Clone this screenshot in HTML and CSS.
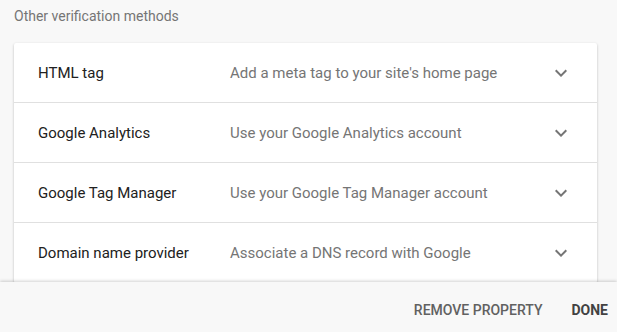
FILE: index.html
```html
<!DOCTYPE html>
<html>
<head>
<meta charset="utf-8">
<link rel="stylesheet" href="styles.css">
</head>
<body>
<div class="page">
  <div class="content">
    <div class="heading">Other verification methods</div>
    <div class="card">
      <div class="row">
        <div class="title">HTML tag</div>
        <div class="desc">Add a meta tag to your site's home page</div>
        <svg class="chev" viewBox="0 0 24 24" width="24" height="24"><path d="M16.59 8.59L12 13.17 7.41 8.59 6 10l6 6 6-6z"/></svg>
      </div>
      <div class="row">
        <div class="title">Google Analytics</div>
        <div class="desc">Use your Google Analytics account</div>
        <svg class="chev" viewBox="0 0 24 24" width="24" height="24"><path d="M16.59 8.59L12 13.17 7.41 8.59 6 10l6 6 6-6z"/></svg>
      </div>
      <div class="row">
        <div class="title">Google Tag Manager</div>
        <div class="desc">Use your Google Tag Manager account</div>
        <svg class="chev" viewBox="0 0 24 24" width="24" height="24"><path d="M16.59 8.59L12 13.17 7.41 8.59 6 10l6 6 6-6z"/></svg>
      </div>
      <div class="row">
        <div class="title">Domain name provider</div>
        <div class="desc">Associate a DNS record with Google</div>
        <svg class="chev" viewBox="0 0 24 24" width="24" height="24"><path d="M16.59 8.59L12 13.17 7.41 8.59 6 10l6 6 6-6z"/></svg>
      </div>
    </div>
  </div>
  <div class="footer">
    <button class="btn">REMOVE PROPERTY</button>
    <button class="btn done">DONE</button>
  </div>
</div>
</body>
</html>
```
FILE: styles.css
```css
html, body {
  margin: 0;
  padding: 0;
  background: #f8f8f8;
  font-family: Roboto, "Noto Sans", sans-serif;
}
.page {
  width: 617px;
  height: 332px;
  display: flex;
  flex-direction: column;
  overflow: hidden;
}
.content {
  height: 282px;
  overflow: hidden;
  padding: 0 20px 0 14px;
}
.heading {
  font-size: 14px;
  color: #757575;
  line-height: 20px;
  padding-top: 6px;
  height: 36px;
  box-sizing: border-box;
}
.card {
  background: #fff;
  box-shadow: 0 1px 3px rgba(0,0,0,0.2), 0 1px 1px rgba(0,0,0,0.12);
  border-radius: 2px;
  margin-top: 7px;
}
.row {
  display: flex;
  align-items: center;
  height: 59px;
  border-bottom: 1px solid #e0e0e0;
  padding-left: 24px;
  padding-right: 24px;
}
.title {
  width: 192px;
  font-size: 15px;
  color: #212121;
}
.desc {
  flex: 1;
  font-size: 15px;
  color: #757575;
}
.chev {
  fill: #757575;
  display: block;
}
.footer {
  flex: 1;
  background: #f8f8f8;
  box-shadow: 0 -1px 3px rgba(0,0,0,0.18);
  position: relative;
  display: flex;
  justify-content: flex-end;
  align-items: center;
  padding-right: 1px;
  gap: 13px;
  padding-top: 6px;
}
.btn {
  background: none;
  border: none;
  font-family: Roboto, sans-serif;
  font-size: 14px;
  font-weight: 500;
  color: #616161;
  padding: 6px 8px;
  cursor: pointer;
}
.btn.done {
  color: #424242;
  font-weight: 700;
}
```
